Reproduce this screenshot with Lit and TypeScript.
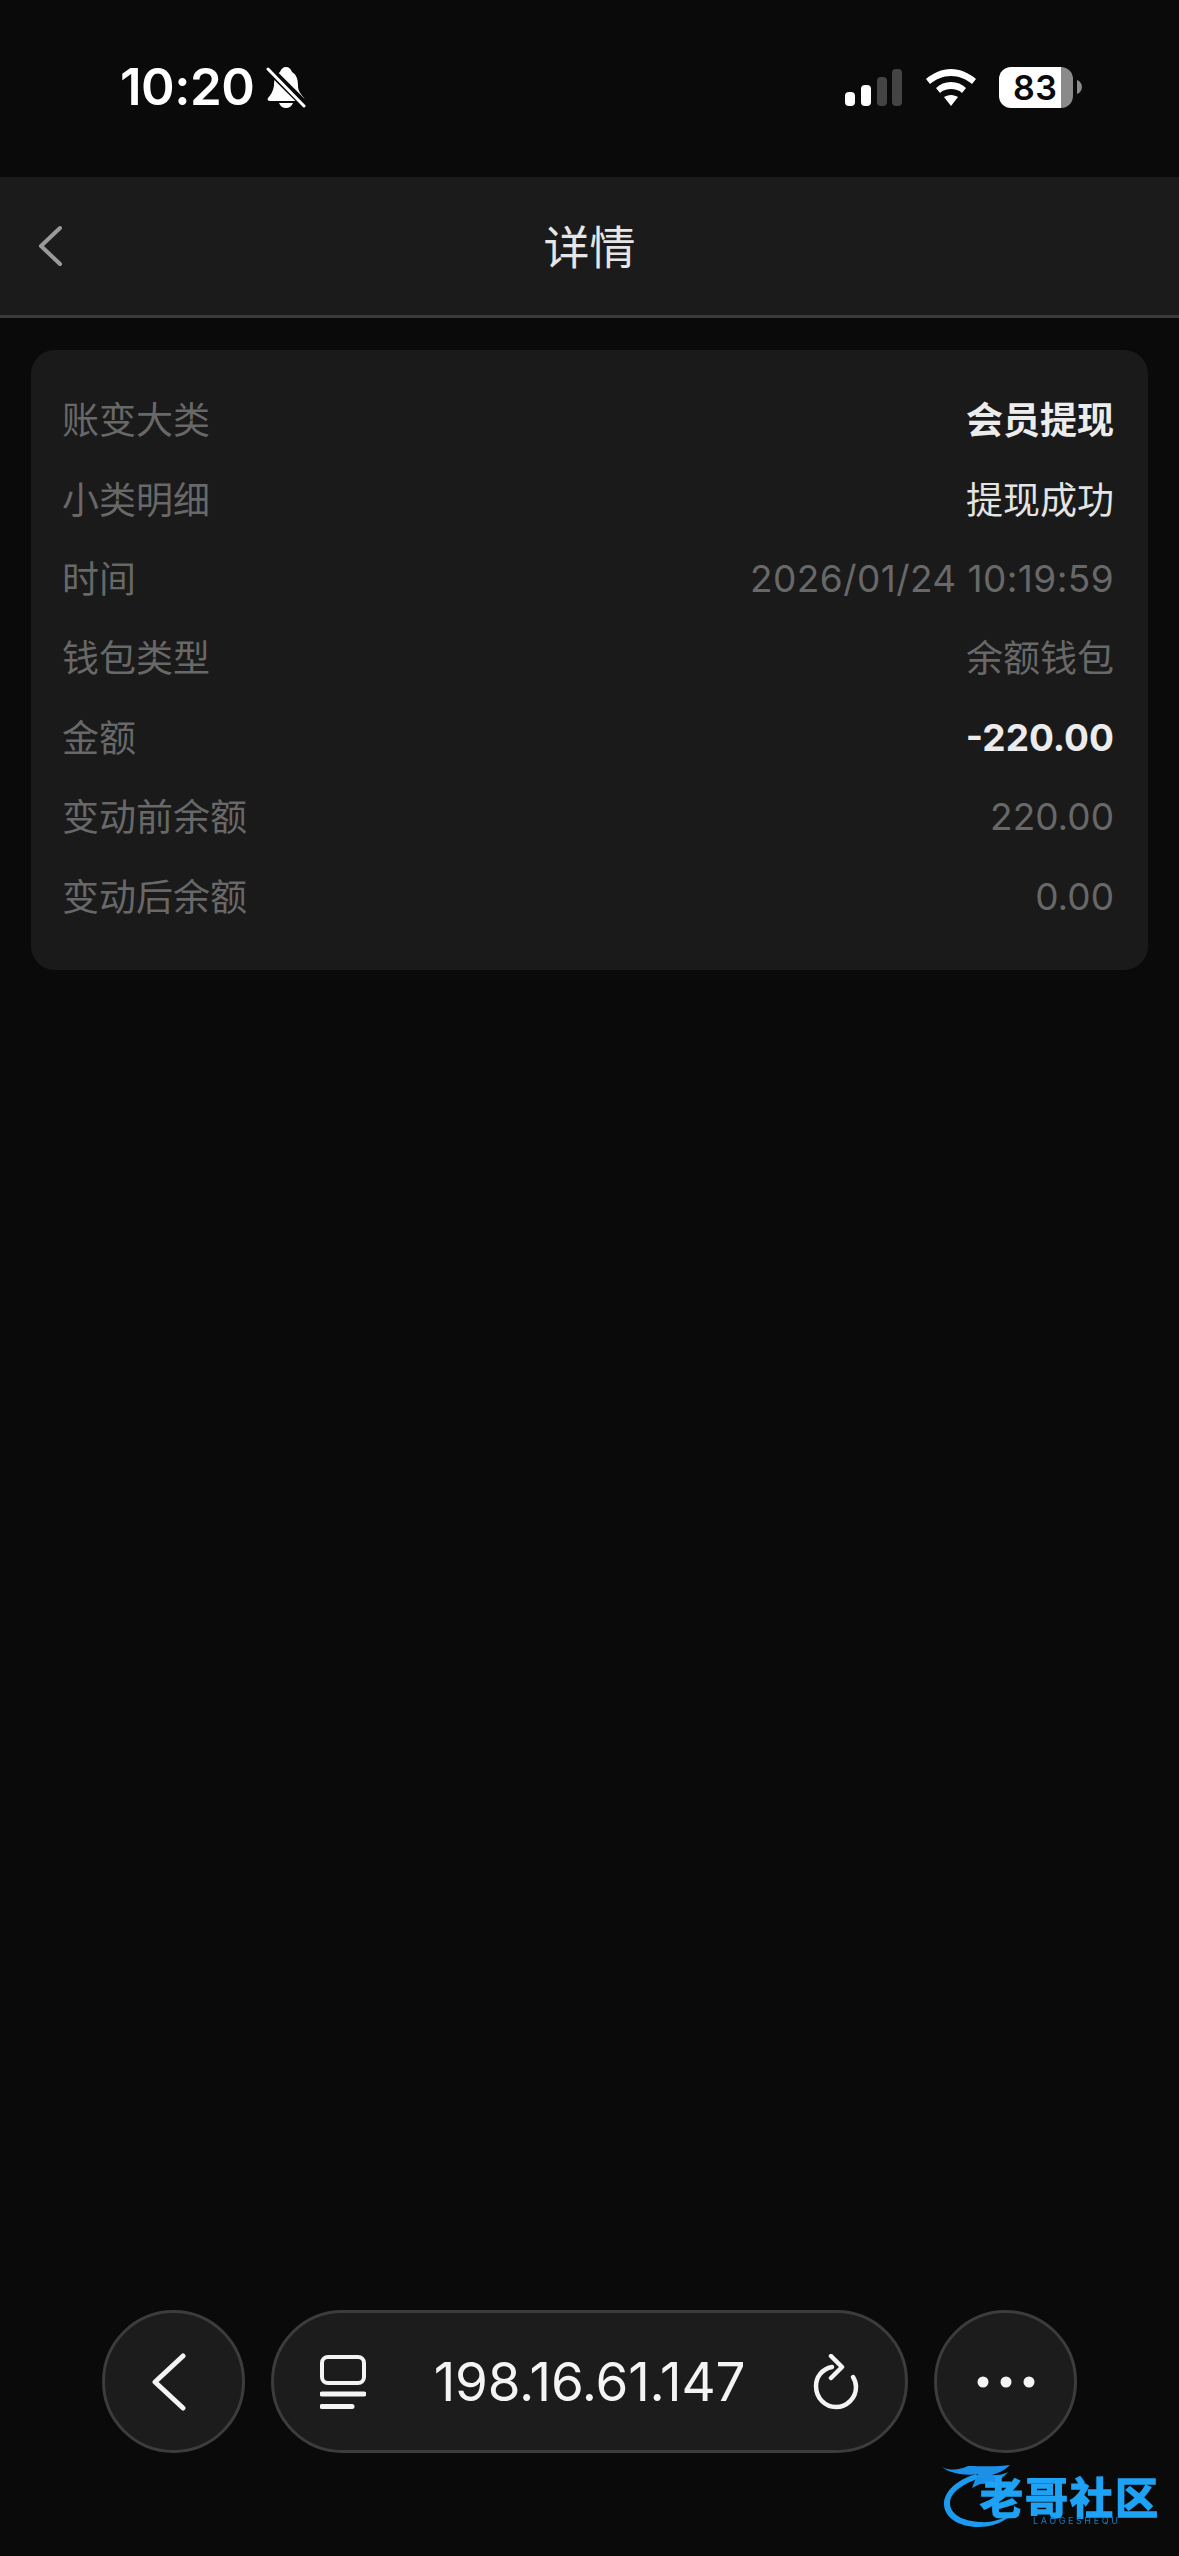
import { css, html, LitElement } from "lit";
import { customElement } from "lit/decorators.js";

const rows = [
    { label: "账变大类", value: "会员提现", cls: "strong cjk" },
    { label: "小类明细", value: "提现成功", cls: "bright cjk" },
    { label: "时间", value: "2026/01/24 10:19:59", cls: "date" },
    { label: "钱包类型", value: "余额钱包", cls: "cjk" },
    { label: "金额", value: "-220.00", cls: "strong" },
    { label: "变动前余额", value: "220.00", cls: "" },
    { label: "变动后余额", value: "0.00", cls: "" },
];

@customElement("app-root")
export class AppRoot extends LitElement {
    static styles = css`
        :host {
            display: flex;
            flex-direction: column;
            position: relative;
            width: 1179px;
            height: 2556px;
            overflow: hidden;
            background: #0a0a0a;
            font-family: Inter, "Noto Sans CJK SC", sans-serif;
        }

        .status {
            height: 177px;
            box-sizing: border-box;
            padding: 60px 97px 0 120px;
            display: flex;
            align-items: flex-start;
            color: #fff;
        }

        .time {
            font-size: 51px;
            line-height: 54px;
            font-weight: 600;
            letter-spacing: -0.5px;
        }

        .bell {
            margin: 6px 0 0 12px;
        }

        .status-right {
            margin-left: auto;
            display: flex;
            align-items: center;
            height: 54px;
        }

        .wifi {
            margin: 0 23px 0 24px;
        }

        .battery {
            position: relative;
            width: 74px;
            height: 41px;
            border-radius: 12px;
            overflow: hidden;
            background: linear-gradient(90deg, #fff 84%, #8a8a8a 84%);
            color: #0a0a0a;
            font-size: 34px;
            line-height: 41px;
            font-weight: 600;
            padding-left: 14px;
            box-sizing: border-box;
            letter-spacing: 0.5px;
        }

        .battery-tip {
            margin-left: 4px;
        }

        .topbar {
            height: 138px;
            flex: none;
            box-sizing: content-box;
            background: #1b1b1b;
            border-bottom: 3px solid #3a3a3a;
            display: flex;
            align-items: center;
            justify-content: center;
            position: relative;
            color: #e6e6e6;
            font-size: 46px;
        }

        .title {
            padding-bottom: 4px;
        }

        .topbar svg {
            position: absolute;
            left: 37px;
            top: 48px;
        }

        .card {
            margin: 32px 31px 0;
            padding: 30px 34px 34px 31px;
            background: #1a1a1a;
            border-radius: 24px;
        }

        .row {
            height: 79.4px;
            display: flex;
            align-items: center;
            justify-content: space-between;
            font-size: 37px;
            color: #686868;
        }

        .label,
        .value.cjk {
            padding-bottom: 3px;
        }

        .value.bright {
            color: #e4e4e4;
        }

        .value.strong {
            color: #ececec;
            font-weight: 700;
        }

        .value.date {
            letter-spacing: 0.42px;
        }

        .nav {
            margin-top: auto;
            padding: 0 0 103px 102px;
            display: flex;
            gap: 26px;
        }

        .round,
        .pill {
            height: 143px;
            box-sizing: border-box;
            background: #1c1c1c;
            border: 3px solid #3c3c3c;
            border-radius: 72px;
            display: flex;
            align-items: center;
            color: #f4f4f4;
        }

        .round {
            width: 143px;
            justify-content: center;
        }

        .pill {
            width: 637px;
            padding: 0 46px;
            justify-content: space-between;
        }

        .url {
            font-size: 53px;
            font-weight: 400;
            letter-spacing: -0.2px;
        }

        .logo {
            position: absolute;
            left: 942px;
            top: 2460px;
            width: 222px;
            height: 70px;
            color: #1a9bf0;
            filter: blur(0.7px);
        }

        .logo svg {
            position: absolute;
            left: 0;
            top: 0;
        }

        .logo-name {
            position: absolute;
            left: 38px;
            top: 22px;
            font-size: 43px;
            line-height: 32px;
            font-weight: 700;
            letter-spacing: 2px;
            white-space: nowrap;
            color: #1ea2f5;
            -webkit-text-stroke: 1.5px #1ea2f5;
        }

        .logo-sub {
            position: absolute;
            left: 91px;
            top: 56px;
            font-size: 9px;
            line-height: 9px;
            letter-spacing: 2.6px;
            white-space: nowrap;
            color: #1a7cc0;
        }
    `;

    render() {
        return html`
            <div class="status">
                <span class="time">10:20</span>
                <svg class="bell" width="40" height="42" viewBox="0 0 40 42">
                    <path fill="#fff" d="M20 1c3 0 5 2 6 5 5 3 6 8 6 14 0 5 3 8 6 12 1 2 0 3-2 3H4c-2 0-3-1-2-3 3-3 5-7 6-12 0-6 1-11 6-14 1-3 3-5 6-5zM13 37h14c-1 3-4 5-7 5s-6-2-7-5z"/>
                    <path stroke="#0a0a0a" stroke-width="8" d="M1 1l38 38"/>
                    <path stroke="#fff" stroke-width="3" stroke-linecap="round" d="M2 3l36 37"/>
                </svg>
                <div class="status-right">
                    <svg width="57" height="37" viewBox="0 0 57 37" fill="#fff">
                        <rect x="0" y="23" width="10" height="14" rx="4"/>
                        <rect x="16" y="16" width="10" height="21" rx="4"/>
                        <rect x="32" y="8" width="10" height="29" rx="4" fill="#444"/>
                        <rect x="47" y="0" width="10" height="37" rx="4" fill="#444"/>
                    </svg>
                    <svg class="wifi" width="50" height="37" viewBox="0 0 50 37" fill="#fff">
                        <path d="M25 0c9 0 18 4 25 10l-4 5c-6-5-13-8-21-8S10 10 4 15L0 10C7 4 16 0 25 0z"/>
                        <path d="M25 13c6 0 11 2 15 6l-4 5c-3-3-7-4-11-4s-8 1-11 4l-4-5c4-4 9-6 15-6z"/>
                        <path d="M25 26c3 0 5 1 7 2l-7 9-7-9c2-1 4-2 7-2z"/>
                    </svg>
                    <div class="battery">83</div>
                    <svg class="battery-tip" width="5" height="14" viewBox="0 0 5 14">
                        <path fill="#8a8a8a" d="M0 0c3 1 5 4 5 7s-2 6-5 7z"/>
                    </svg>
                </div>
            </div>

            <div class="topbar">
                <svg width="26" height="42" viewBox="0 0 26 42" fill="none">
                    <path d="M23 3L4 21l19 18" stroke="#9a9a9a" stroke-width="4" stroke-linecap="round" stroke-linejoin="round"/>
                </svg>
                <span class="title">详情</span>
            </div>

            <div class="card">
                ${rows.map(
                    (r) => html`<div class="row">
                        <span class="label">${r.label}</span>
                        <span class="value ${r.cls}">${r.value}</span>
                    </div>`
                )}
            </div>

            <div class="nav">
                <div class="round">
                    <svg width="36" height="58" viewBox="0 0 36 58" fill="none" style="margin-right:12px">
                        <path d="M33 3L5 29l28 26" stroke="#f4f4f4" stroke-width="5" stroke-linecap="round" stroke-linejoin="round"/>
                    </svg>
                </div>
                <div class="pill">
                    <svg width="46" height="54" viewBox="0 0 46 54" fill="none" stroke="#f4f4f4">
                        <rect x="2" y="2" width="42" height="26" rx="6" stroke-width="4"/>
                        <path d="M2 39h42M2 51.500h30" stroke-width="5" stroke-linecap="round"/>
                    </svg>
                    <span class="url">198.16.61.147</span>
                    <svg width="46" height="56" viewBox="0 0 46 56" fill="none" stroke="#f4f4f4" stroke-width="4.500" stroke-linecap="round" stroke-linejoin="round">
                        <path d="M19 13C9 15 3 23 3 32c0 12 9 21 20 21s20-9 20-20c0-4-1-7-3-10"/>
                        <path d="M18 2l11 11-11 11"/>
                    </svg>
                </div>
                <div class="round">
                    <svg width="58" height="12" viewBox="0 0 58 12" fill="#f4f4f4">
                        <circle cx="6" cy="6" r="5.500"/>
                        <circle cx="29" cy="6" r="5.500"/>
                        <circle cx="52" cy="6" r="5.500"/>
                    </svg>
                </div>
            </div>

            <div class="logo">
                <svg width="110" height="70" viewBox="0 0 110 70" fill="none">
                    <path d="M34 14C14 20 2 32 2 44c0 14 16 23 34 23 14 0 26-4 38-16-12 8-24 12-36 11C20 61 8 54 8 43c0-10 12-19 30-25z" fill="#1a9bf0"/>
                    <path d="M0 7c8 4 18 3 26-1 12 0 30 1 42-1-6 6-12 8-18 10 6 0 10 0 16-3-6 8-16 12-28 12l-8 4c2-6 4-10 6-14C26 16 8 14 0 7z" fill="#1a90e8"/>
                </svg>
                <span class="logo-name">老哥社区</span>
                <span class="logo-sub">LAOGESHEQU</span>
            </div>
        `;
    }
}

declare global {
    interface HTMLElementTagNameMap {
        "app-root": AppRoot;
    }
}
